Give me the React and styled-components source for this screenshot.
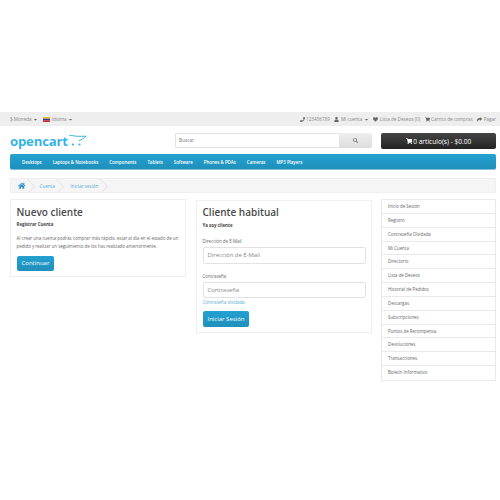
import React from "react";
import styled, { createGlobalStyle } from "styled-components";
import { FaPhone, FaUser, FaHeart, FaShoppingCart, FaShare, FaHome, FaSearch, FaCaretDown } from "react-icons/fa";

const Global = createGlobalStyle`
  html, body { margin: 0; padding: 0; background: #fff; }
  * { box-sizing: border-box; }
  body { font-family: "Open Sans", "Liberation Sans", sans-serif; color: #666; }
`;

const Page = styled.div`
  width: 500px;
  height: 500px;
  padding-top: 112px;
  overflow: hidden;
`;

const TopBar = styled.div`
  height: 14px;
  background: #eeeeee;
  padding: 0 4px 0 10px;
  display: flex;
  justify-content: space-between;
  align-items: center;
  font-size: 4.65px;
  color: #888;
`;

const TopGroup = styled.div`
  display: flex;
  align-items: center;
  gap: ${(p) => p.$gap}px;
`;

const TopItem = styled.span`
  display: flex;
  align-items: center;
  gap: 1.5px;
  white-space: nowrap;
  svg { font-size: 5px; color: #666; }
`;

const Header = styled.div`
  height: 28px;
  padding: 7px 4px 0 10px;
  display: flex;
`;

const Logo = styled.div`
  width: 165px;
  height: 18px;
  display: flex;
  align-items: flex-start;
  color: #35b3e6;
  font-size: 13.2px;
  font-weight: 700;
  letter-spacing: -0.2px;
  line-height: 17px;
  svg { margin: 0 0 0 1.5px; }
`;

const Search = styled.div`
  width: 197px;
  height: 15px;
  display: flex;
  margin-right: 9px;
`;

const SearchInput = styled.div`
  flex: 1;
  border: 1px solid #e2e2e2;
  border-right: 0;
  border-radius: 2px 0 0 2px;
  padding-left: 3px;
  font-size: 4.7px;
  line-height: 13px;
  color: #777;
`;

const SearchButton = styled.div`
  width: 33px;
  background: linear-gradient(#eeeeee, #dddddd);
  border-radius: 0 2px 2px 0;
  display: flex;
  align-items: center;
  justify-content: center;
  color: #777;
  font-size: 5px;
`;

const Cart = styled.div`
  width: 115px;
  height: 16px;
  border-radius: 2px;
  background: linear-gradient(#444444, #232323);
  color: #fff;
  font-size: 6.6px;
  display: flex;
  align-items: center;
  justify-content: center;
  gap: 1px;
  svg { font-size: 6.5px; }
`;

const Nav = styled.div`
  height: 16px;
  margin: 0 4px 0 10px;
  padding-left: 12px;
  border-radius: 2px;
  background: linear-gradient(#23a1d1, #1f90bb);
  border-bottom: 1px solid #7fc0da;
  display: flex;
  align-items: center;
  gap: 11px;
  color: #fff;
  font-size: 4.4px;
  font-weight: 600;
`;

const Breadcrumb = styled.div`
  height: 15px;
  margin: 8px 4px 0 10px;
  background: #f5f5f5;
  border: 1px solid #efefef;
  display: flex;
  align-items: center;
  overflow: hidden;
  color: #5aa9d3;
  font-size: 4.6px;
`;

const Crumb = styled.span`
  position: relative;
  height: 13px;
  display: flex;
  align-items: center;
  padding: 0 ${(p) => p.$right}px 0 ${(p) => p.$left}px;
  svg { font-size: 7.5px; color: #2a93c8; }
  &::after {
    content: "";
    position: absolute;
    right: 1px;
    top: 1.5px;
    width: 10px;
    height: 10px;
    border-top: 1px solid #e6e6e6;
    border-right: 1px solid #e6e6e6;
    transform: rotate(45deg);
  }
`;

const Content = styled.div`
  margin: 6px 4px 0 10px;
  display: flex;
  align-items: flex-start;
`;

const Panel = styled.div`
  width: 176px;
  margin-right: ${(p) => p.$gap}px;
  margin-top: ${(p) => p.$top}px;
  border: 1px solid #eeeeee;
  padding: ${(p) => 5 - p.$top}px 5.5px 5px;
`;

const Title = styled.h2`
  margin: 0;
  font-size: 10px;
  font-weight: 600;
  line-height: 14px;
  color: #4a4a4a;
`;

const Strong = styled.p`
  margin: ${(p) => p.$top}px 0 0;
  font-size: 4.4px;
  font-weight: 700;
  line-height: 7px;
  color: #444;
`;

const Text = styled.p`
  margin: 6.5px 0 0;
  font-size: 4.4px;
  line-height: 8px;
  color: #666;
`;

const Button = styled.div`
  width: fit-content;
  margin-top: ${(p) => p.$top}px;
  padding: 0 5px;
  height: ${(p) => p.$h}px;
  line-height: ${(p) => p.$h}px;
  font-size: 6px;
  font-weight: 400;
  color: #fff;
  border-radius: 2px;
  background: linear-gradient(#23a1d1, #1f90bb);
`;

const Label = styled.div`
  margin-top: ${(p) => p.$top}px;
  font-size: 4.4px;
  line-height: 7px;
  color: #666;
`;

const Input = styled.div`
  margin-top: 2.5px;
  height: ${(p) => p.$h}px;
  border: 1px solid #e2e2e2;
  border-radius: 2px;
  padding-left: 4px;
  font-size: 5.9px;
  line-height: ${(p) => p.$h - 2}px;
  color: #888;
`;

const Forgot = styled.div`
  margin-top: 0.5px;
  font-size: 4.4px;
  line-height: 7px;
  color: #5aa9d3;
`;

const Sidebar = styled.div`
  width: 115px;
  margin-left: 9px;
  border: 1px solid #e9e9e9;
`;

const SideItem = styled.div`
  height: 13.85px;
  line-height: 13px;
  padding-left: 6px;
  font-size: 4.4px;
  color: #666;
  border-bottom: 1px solid #e9e9e9;
  &:last-child { border-bottom: 0; }
`;

const links = [
  "Inicio de Sesión", "Registro", "Contraseña Olvidada", "Mi Cuenta", "Directorio",
  "Lista de Deseos", "Historial de Pedidos", "Descargas", "Subscripciones",
  "Puntos de Recompensa", "Devoluciones", "Transacciones", "Boletín Informativo",
];
const menu = ["Desktops", "Laptops & Notebooks", "Components", "Tablets", "Software", "Phones & PDAs", "Cameras", "MP3 Players"];

function Flag() {
  return (
    <svg width="7" height="5" viewBox="0 0 7 5">
      <rect width="7" height="1.7" fill="#e8c220" />
      <rect y="1.7" width="7" height="1.6" fill="#2b3f9e" />
      <rect y="3.3" width="7" height="1.7" fill="#c8242c" />
    </svg>
  );
}

function CartMark() {
  return (
    <svg width="18" height="16" viewBox="0 0 18 16" fill="none">
      <path d="M0.500 2.500h2c4 .8 8 1 14.500 .7-2 1.800-4 3.300-7 4.500" stroke="#35b3e6" strokeWidth="1" />
      <circle cx="4" cy="11.500" r="1.100" fill="#35b3e6" />
      <circle cx="10.500" cy="11.500" r="1.100" fill="#35b3e6" />
    </svg>
  );
}

export default function App() {
  return (
    <Page>
      <Global />
      <TopBar>
        <TopGroup $gap={5}>
          <TopItem>$ Moneda <FaCaretDown /></TopItem>
          <TopItem><Flag /> Idioma <FaCaretDown /></TopItem>
        </TopGroup>
        <TopGroup $gap={4.5}>
          <TopItem><FaPhone /> 123456789</TopItem>
          <TopItem><FaUser /> Mi cuenta <FaCaretDown /></TopItem>
          <TopItem><FaHeart /> Lista de Deseos (0)</TopItem>
          <TopItem><FaShoppingCart /> Carrito de compras</TopItem>
          <TopItem><FaShare /> Pagar</TopItem>
        </TopGroup>
      </TopBar>
      <Header>
        <Logo>opencart<CartMark /></Logo>
        <Search>
          <SearchInput>Buscar</SearchInput>
          <SearchButton><FaSearch /></SearchButton>
        </Search>
        <Cart><FaShoppingCart /> 0 artículo(s) - $0.00</Cart>
      </Header>
      <Nav>
        {menu.map((m) => <span key={m}>{m}</span>)}
      </Nav>
      <Breadcrumb>
        <Crumb $left={7} $right={8}><FaHome /></Crumb>
        <Crumb $left={6} $right={8}>Cuenta</Crumb>
        <Crumb $left={7.5} $right={9}>Iniciar sesión</Crumb>
      </Breadcrumb>
      <Content>
        <Panel $gap={10} $top={0}>
          <Title>Nuevo cliente</Title>
          <Strong $top={1.5}>Registrar Cuenta</Strong>
          <Text>Al crear una cuenta podrás comprar más rápido, estar al día en el estado de un pedido y realizar un seguimiento de los has realizado anteriormente.</Text>
          <Button $top={6} $h={15}>Continuar</Button>
        </Panel>
        <Panel $gap={0} $top={1}>
          <Title>Cliente habitual</Title>
          <Strong $top={2.5}>Ya soy cliente</Strong>
          <Label $top={9}>Dirección de E-Mail</Label>
          <Input $h={17}>Dirección de E-Mail</Input>
          <Label $top={8.5}>Contraseña</Label>
          <Input $h={16}>Contraseña</Input>
          <Forgot>Contraseña olvidada</Forgot>
          <Button $top={5.5} $h={16}>Iniciar Sesión</Button>
        </Panel>
        <Sidebar>
          {links.map((l) => <SideItem key={l}>{l}</SideItem>)}
        </Sidebar>
      </Content>
    </Page>
  );
}
